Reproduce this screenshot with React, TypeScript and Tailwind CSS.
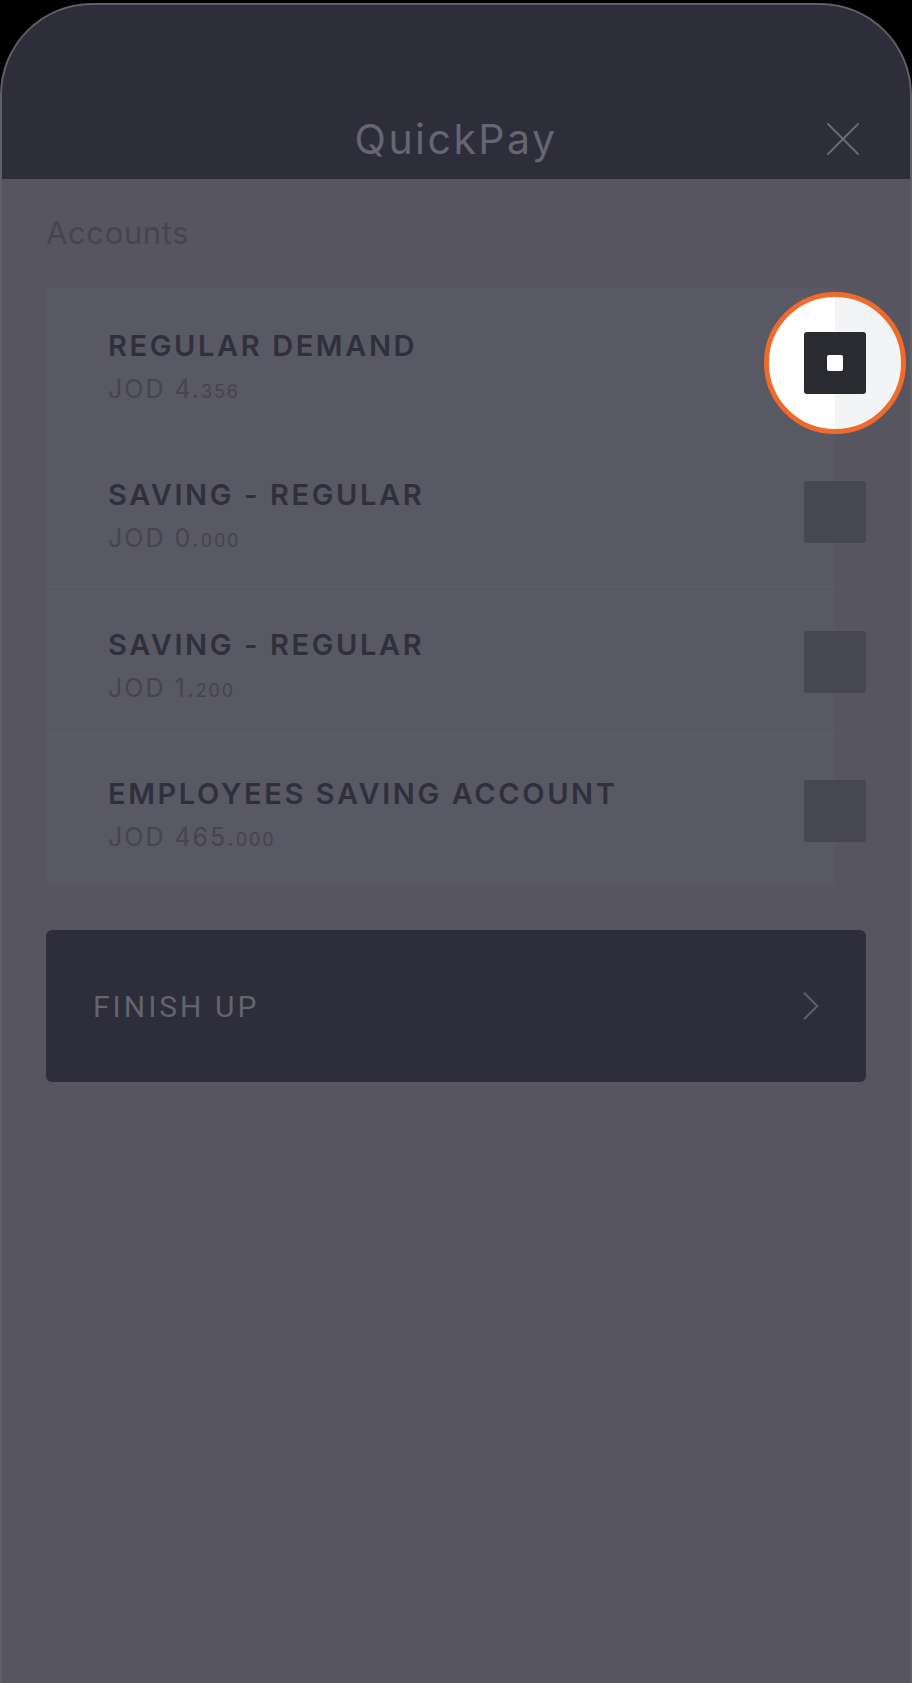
import { X, ChevronRight } from "lucide-react";

const accounts = [
  { name: "REGULAR DEMAND", whole: "4.", frac: "356", active: true },
  { name: "SAVING - REGULAR", whole: "0.", frac: "000", active: false },
  { name: "SAVING - REGULAR", whole: "1.", frac: "200", active: false },
  { name: "EMPLOYEES SAVING ACCOUNT", whole: "465.", frac: "000", active: false },
];

function Checkbox({ active }: { active: boolean }) {
  if (!active) {
    return <div className="w-[62px] h-[62px] rounded-[3px] bg-[#474653]" />;
  }
  return (
    <div className="relative w-[62px] h-[62px]">
      {/* tutorial spotlight */}
      <div className="absolute left-1/2 top-1/2 -translate-x-1/2 -translate-y-1/2 w-[142px] h-[142px] rounded-full border-[5px] border-[#f06a2c] bg-[linear-gradient(to_right,#ffffff_50%,#f3f4f6_50%)]" />
      <div className="relative w-[62px] h-[62px] rounded-[3px] bg-[#2a2b31] flex items-center justify-center">
        <div className="w-[16px] h-[16px] rounded-[2px] bg-white" />
      </div>
    </div>
  );
}

export default function App() {
  return (
    <div className="w-[912px] h-[1683px] bg-black overflow-hidden font-['Inter',sans-serif]">
      <div className="mt-[3px] h-[1680px] rounded-t-[92px] overflow-hidden bg-[#565560] border-x-2 border-t-2 border-[#605f6a]">
        {/* header */}
        <div className="h-[174px] bg-[#2e2d3a] grid grid-cols-[1fr_auto_1fr] items-end pb-[16px]">
          <div />
          <div className="text-[41px] leading-[48px] tracking-[0.06em] text-[#666573]">QuickPay</div>
          <div className="flex justify-end pr-[37px] -mb-[6px]">
            <X className="w-[60px] h-[60px] text-[#6a6976]" strokeWidth={0.8} />
          </div>
        </div>

        {/* body */}
        <div className="px-[44px] pt-[36px]">
          <div className="text-[31px] leading-[36px] tracking-[0.02em] text-[#46454f]">Accounts</div>

          <div className="mt-[37px] w-[789px] bg-[#595865]">
            {accounts.map((a, i) => (
              <div
                key={i}
                className={`h-[149px] flex justify-between pl-[62px] ${i > 1 ? "border-t border-[#5d5c68]" : ""}`}
              >
                <div className="pt-[41px]">
                  <div className="text-[29px] leading-[34px] font-semibold tracking-[0.09em] text-[#30303c]">
                    {a.name}
                  </div>
                  <div className="mt-[11px] text-[25px] leading-[30px] tracking-[0.08em] text-[#45444f]">
                    JOD {a.whole}
                    <span className="text-[18px] tracking-[0.1em]">{a.frac}</span>
                  </div>
                </div>
                <div className="pt-[44px] -mr-[31px]">
                  <Checkbox active={a.active} />
                </div>
              </div>
            ))}
          </div>

          <button className="mt-[46px] w-[820px] h-[152px] rounded-[6px] bg-[#2e2d3b] flex items-center justify-between pl-[47px] pr-[30px]">
            <span className="font-['Roboto',sans-serif] text-[30px] tracking-[0.1em] text-[#64636f]">FINISH UP</span>
            <ChevronRight className="w-[50px] h-[50px] text-[#5d5c69]" strokeWidth={1.1} />
          </button>
        </div>
      </div>
    </div>
  );
}
